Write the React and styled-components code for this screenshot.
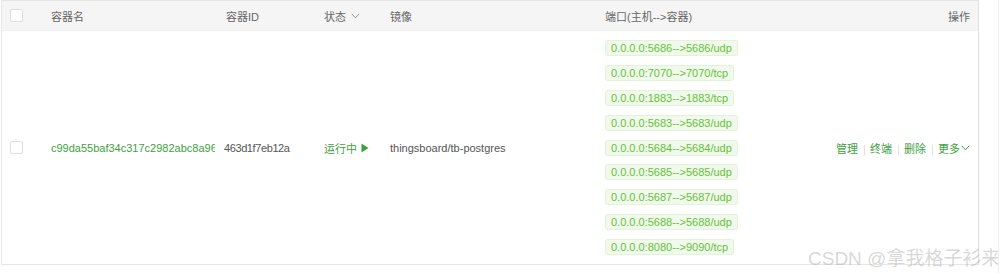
import styled, { createGlobalStyle } from "styled-components"

const GlobalStyle = createGlobalStyle`
    body {
        margin: 0;
        background: #fff;
        font-family: "Liberation Sans", "Noto Sans CJK SC", sans-serif;
    }
`

const ports = [
    "0.0.0.0:5686-->5686/udp",
    "0.0.0.0:7070-->7070/tcp",
    "0.0.0.0:1883-->1883/tcp",
    "0.0.0.0:5683-->5683/udp",
    "0.0.0.0:5684-->5684/udp",
    "0.0.0.0:5685-->5685/udp",
    "0.0.0.0:5687-->5687/udp",
    "0.0.0.0:5688-->5688/udp",
    "0.0.0.0:8080-->9090/tcp",
]

const actions = ["管理", "终端", "删除"]

function Chevron({ color }) {
    return <svg width="9" height="6" viewBox="0 0 9 6">
        <polyline points="0.8,0.8 4.5,4.8 8.2,0.8" fill="none" stroke={color} strokeWidth="1" />
    </svg>
}

function App() {
    return <>
        <GlobalStyle />
        <Page>
            <Table>
                <HeaderRow>
                    <CheckCell><Checkbox /></CheckCell>
                    <Cell>容器名</Cell>
                    <Cell>容器ID</Cell>
                    <Cell>
                        状态
                        <ChevronWrap><Chevron color="#999" /></ChevronWrap>
                    </Cell>
                    <Cell>镜像</Cell>
                    <Cell>端口(主机-->容器)</Cell>
                    <ActionCell>操作</ActionCell>
                </HeaderRow>
                <BodyRow>
                    <CheckCell><Checkbox /></CheckCell>
                    <NameCell>c99da55baf34c317c2982abc8a968f3c</NameCell>
                    <IdCell>463d1f7eb12a</IdCell>
                    <StatusCell>
                        运行中
                        <svg width="8" height="10" viewBox="0 0 8 10">
                            <polygon points="0.5,0.5 7.5,5 0.5,9.5" fill="#3f9f3f" />
                        </svg>
                    </StatusCell>
                    <Cell>thingsboard/tb-postgres</Cell>
                    <PortCell>
                        {ports.map(p => <Tag key={p}>{p}</Tag>)}
                    </PortCell>
                    <ActionCell>
                        {actions.map(a => <span key={a}>
                            <ActionLink>{a}</ActionLink>
                            <Divider />
                        </span>)}
                        <ActionLink>
                            更多
                            <Chevron color="#3f9f3f" />
                        </ActionLink>
                    </ActionCell>
                </BodyRow>
            </Table>
            <Watermark>CSDN @拿我格子衫来</Watermark>
        </Page>
    </>
}

export default App

const Page = styled.div`
    position: relative;
    width: 999px;
    height: 273px;
    box-sizing: border-box;
    border-right: 1px solid #f0f0f0;
    overflow: hidden;
`

const Table = styled.div`
    width: 978px;
    margin-left: 1px;
    box-sizing: border-box;
    border: 1px solid #e6e6e6;
    border-right-color: #e0e0e0;
    font-size: 11px;
`

const rowGrid = `
    display: grid;
    grid-template-columns: 40px 175px 98px 66px 215px 200px 1fr;
    align-items: center;
`

const HeaderRow = styled.div`
    ${rowGrid};
    height: 29px;
    background: #f5f5f5;
    color: #666;
`

const BodyRow = styled.div`
    ${rowGrid};
    height: 233px;
    background: #fff;
    color: #555;
    border-top: 1px solid #f0f0f0;
`

const Cell = styled.div`
    display: flex;
    align-items: center;
    padding-left: 9px;
    white-space: nowrap;
`

const CheckCell = styled.div`
    padding-left: 8px;
    display: flex;
    align-items: center;
`

const Checkbox = styled.span`
    display: block;
    width: 11px;
    height: 11px;
    border: 1px solid #dcdfe6;
    border-radius: 2px;
    background: #fff;
`

const NameCell = styled(Cell)`
    overflow: hidden;
    margin-right: 2px;
    color: #3f9f3f;
`

const IdCell = styled(Cell)`
    padding-left: 7px;
    letter-spacing: -0.4px;
`

const StatusCell = styled(Cell)`
    color: #3f9f3f;
    gap: 4px;
`

const ChevronWrap = styled.span`
    display: flex;
    margin-left: 5px;
`

const PortCell = styled(Cell)`
    flex-direction: column;
    align-items: flex-start;
    gap: 8.9px;
`

const Tag = styled.span`
    display: flex;
    align-items: center;
    height: 16px;
    box-sizing: border-box;
    padding: 0 5px;
    background: #f0f9eb;
    border: 1px solid #e1f3d8;
    border-radius: 3px;
    color: #67c23a;
    font-size: 11px;
`

const ActionCell = styled.div`
    display: flex;
    align-items: center;
    justify-content: flex-end;
    padding-right: 8px;
    white-space: nowrap;
`

const ActionLink = styled.span`
    display: inline-flex;
    align-items: center;
    gap: 1px;
    color: #3f9f3f;
`

const Divider = styled.span`
    display: inline-block;
    width: 1px;
    height: 10px;
    margin: 0 5.5px;
    background: #e0e0e0;
    vertical-align: middle;
`

const Watermark = styled.div`
    position: absolute;
    left: 808px;
    top: 243px;
    font-size: 19px;
    color: rgba(160, 160, 160, 0.42);
    white-space: nowrap;
    pointer-events: none;
`
